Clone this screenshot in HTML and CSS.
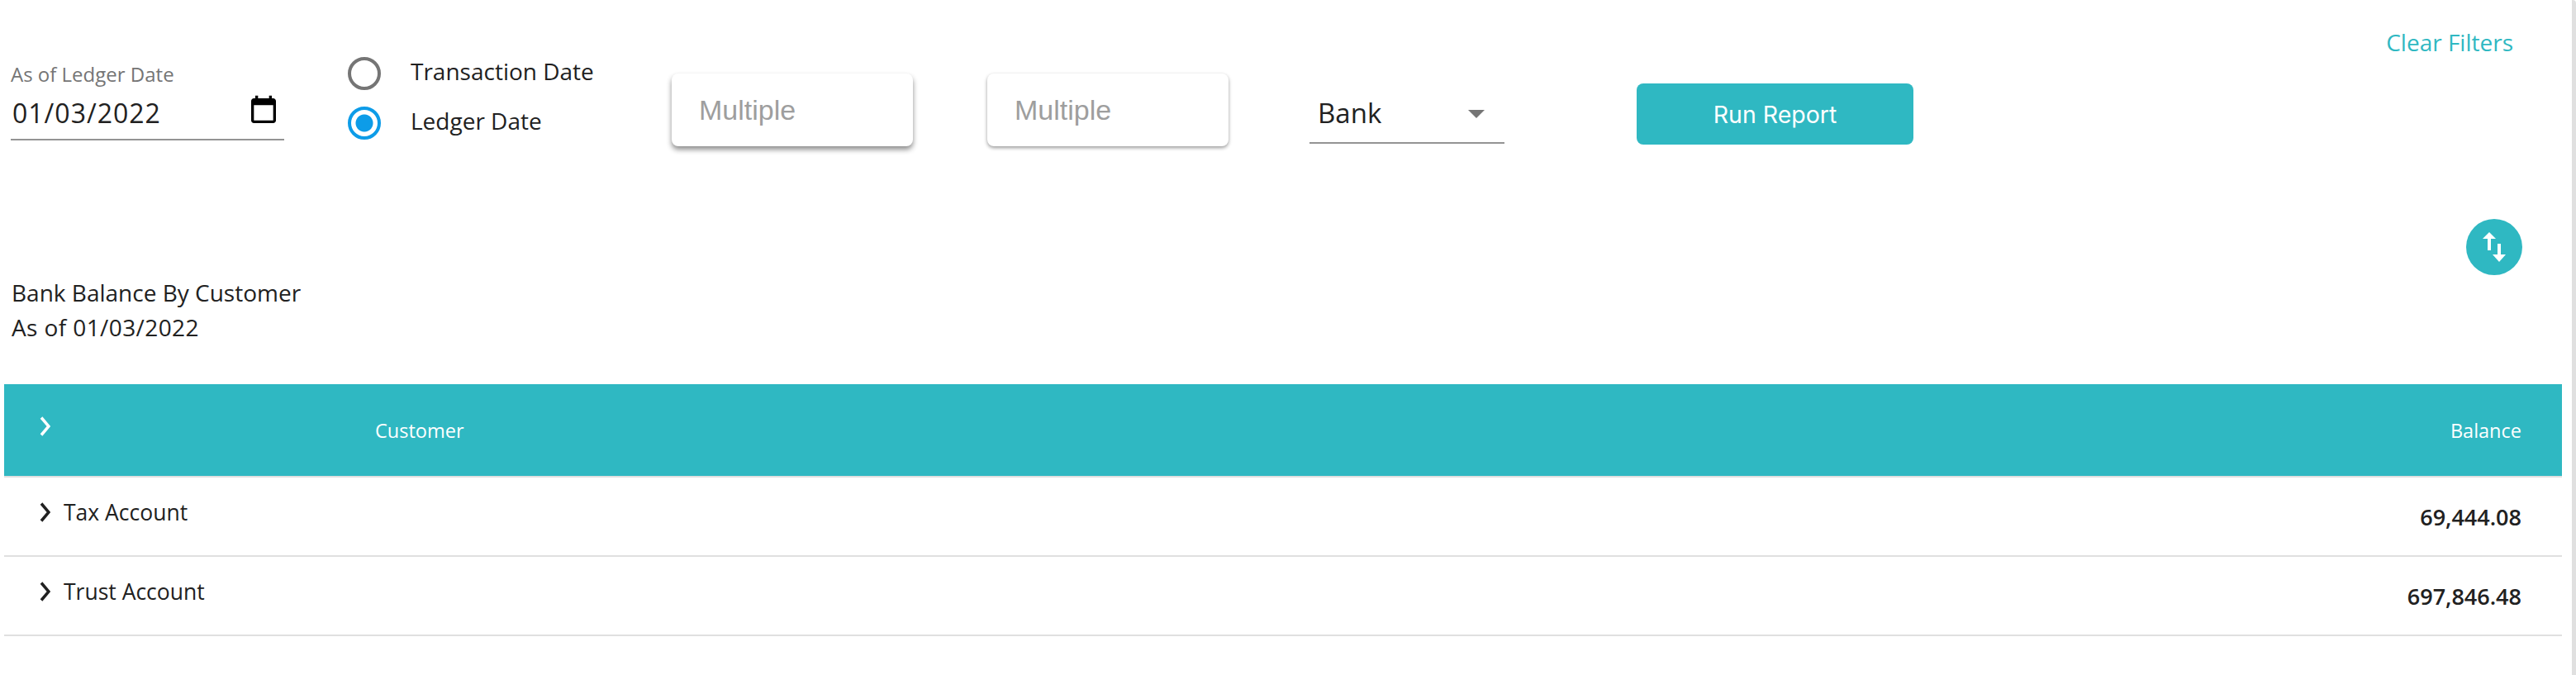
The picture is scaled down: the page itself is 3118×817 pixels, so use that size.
FILE: index.html
```html
<!DOCTYPE html>
<html lang="en">
<head>
  <meta charset="UTF-8" />
  <title>Bank Balance By Customer</title>
  <link rel="stylesheet" href="styles.css">
</head>
<body>
  <div class="page">

    <!-- Filters -->
    <div class="filters">
      <div class="date-field">
        <span class="date-label">As of Ledger Date</span>
        <div class="date-input">
          <span>01/03/2022</span>
          <svg class="calendar" viewBox="0 0 24 24" width="40" height="40"><path d="M19 3h-1V1h-2v2H8V1H6v2H5c-1.100 0-2 .9-2 2v14c0 1.100.9 2 2 2h14c1.100 0 2-.9 2-2V5c0-1.100-.9-2-2-2zm0 16H5V8h14v11z"/></svg>
        </div>
      </div>

      <div class="radios">
        <div class="radio-row">
          <span class="radio"></span>
          <span class="radio-label">Transaction Date</span>
        </div>
        <div class="radio-row">
          <span class="radio radio-on"></span>
          <span class="radio-label">Ledger Date</span>
        </div>
      </div>

      <div class="multi multi-first">Multiple</div>
      <div class="multi multi-second">Multiple</div>

      <div class="select">
        <span>Bank</span>
        <span class="caret"></span>
      </div>

      <button class="btn">Run Report</button>

      <a class="clear-link">Clear Filters</a>
    </div>

    <!-- Report title -->
    <div class="report-head">
      <div class="report-title">
        <div>Bank Balance By Customer</div>
        <div class="report-date">As of 01/03/2022</div>
      </div>
      <span class="swap-btn">
        <svg viewBox="0 0 68 68" width="68" height="68"><path d="M28 16 L20 24 H26 V38 H30 V24 H36 Z M38 30 V43 H32 L40 52 L48 43 H42 V30 Z" fill="#fff"/></svg>
      </span>
    </div>

    <!-- Table -->
    <div class="table">
      <div class="table-head">
        <svg class="chevron" viewBox="0 0 14 24" width="14" height="24"><path d="M3 1.500 L12 12 L3 22.500" fill="none" stroke="#fff" stroke-width="3.500"/></svg>
        <span class="col-name">Customer</span>
        <span class="col-amount">Balance</span>
      </div>
      <div class="table-row">
        <svg class="chevron" viewBox="0 0 14 24" width="14" height="24"><path d="M3 1.500 L12 12 L3 22.500" fill="none" stroke="#212121" stroke-width="3.500"/></svg>
        <span class="row-name">Tax Account</span>
        <span class="row-amount">69,444.08</span>
      </div>
      <div class="table-row">
        <svg class="chevron" viewBox="0 0 14 24" width="14" height="24"><path d="M3 1.500 L12 12 L3 22.500" fill="none" stroke="#212121" stroke-width="3.500"/></svg>
        <span class="row-name">Trust Account</span>
        <span class="row-amount">697,846.48</span>
      </div>
    </div>

  </div>
</body>
</html>
```

FILE: styles.css
```css
* {
  box-sizing: border-box;
}

body {
  margin: 0;
  height: 817px;
  overflow: hidden;
  background: #fff;
  font-family: 'Open Sans', sans-serif;
  color: #212121;
}

.page {
  width: 3118px;
  height: 817px;
  border-right: 5px solid #e0e0e0;
  border-top-right-radius: 4px;
}

/* Filters row */
.filters {
  display: flex;
  align-items: flex-start;
  height: 228px;
}

.date-field {
  width: 331px;
  height: 92px;
  margin-left: 13px;
  margin-top: 78px;
  border-bottom: 2px solid #949494;
}

.date-label {
  display: block;
  height: 24px;
  line-height: 24px;
  font-size: 24px;
  color: #757575;
}

.date-input {
  display: flex;
  justify-content: space-between;
  align-items: center;
  height: 68px;
  padding-left: 2px;
  font-size: 32px;
  letter-spacing: 1px;
}

.calendar {
  margin-right: 5px;
  margin-bottom: 4px;
}

.radios {
  width: 302px;
  margin-left: 77px;
  margin-top: 59px;
}

.radio-row {
  display: flex;
  align-items: center;
  gap: 36px;
  height: 60px;
  font-size: 28px;
}

.radio-label {
  margin-bottom: 6px;
}

.radio {
  width: 40px;
  height: 40px;
  border: 4px solid #757575;
  border-radius: 50%;
}

.radio-on {
  border-color: #0d9ce8;
  background: radial-gradient(circle, #0d9ce8 0 10px, #fff 11px);
}

.multi {
  display: flex;
  align-items: center;
  width: 292px;
  height: 88px;
  margin-top: 89px;
  padding-left: 33px;
  border-radius: 8px;
  font-family: 'Liberation Sans', sans-serif;
  font-size: 34px;
  color: #9e9e9e;
  background: #fff;
}

.multi-first {
  margin-left: 90px;
  box-shadow: 0 4px 6px rgba(0, 0, 0, 0.45);
}

.multi-second {
  margin-left: 90px;
  box-shadow: 0 2px 4px rgba(0, 0, 0, 0.4);
}

.select {
  display: flex;
  justify-content: space-between;
  align-items: center;
  width: 236px;
  height: 74px;
  margin-left: 98px;
  margin-top: 100px;
  padding: 0 24px 0 10px;
  border-bottom: 2px solid #949494;
  font-size: 33px;
}

.caret {
  margin-top: 4px;
  border-left: 10px solid transparent;
  border-right: 10px solid transparent;
  border-top: 10px solid #757575;
}

.btn {
  width: 335px;
  height: 74px;
  margin-left: 160px;
  margin-top: 101px;
  border: none;
  border-radius: 8px;
  background: #2fb8c2;
  color: #fff;
  font-family: Inter, sans-serif;
  font-size: 28.500px;
}

.clear-link {
  margin-left: auto;
  margin-right: 71px;
  margin-top: 31px;
  line-height: 40px;
  color: #2fb8c2;
  font-size: 28px;
}

/* Report heading */
.report-head {
  display: flex;
  justify-content: space-between;
  align-items: flex-start;
  height: 237px;
}

.report-title {
  margin-left: 14px;
  margin-top: 105px;
  font-size: 28px;
  line-height: 42px;
}

.report-date {
  letter-spacing: 0.4px;
}

.swap-btn {
  width: 68px;
  height: 68px;
  margin-top: 37px;
  margin-right: 60px;
  border-radius: 50%;
  background: #2fb8c2;
}

/* Table */
.table {
  width: 3096px;
  margin-left: 5px;
}

.table-head,
.table-row {
  display: flex;
  align-items: center;
  padding: 0 49px 0 42px;
  border-bottom: 2px solid #e0e0e0;
}

.table-head {
  height: 113px;
  background: #2fb8c2;
  color: #fff;
  font-size: 23.500px;
}

.chevron {
  margin-bottom: 10px;
}

.col-name {
  margin-left: 393px;
}

.col-amount {
  margin-left: auto;
}

.table-row {
  height: 96px;
  font-size: 26.500px;
}

.row-name {
  margin-left: 16px;
  margin-bottom: 10px;
}

.row-amount {
  margin-left: auto;
  font-size: 27px;
  font-weight: 600;
}
```
